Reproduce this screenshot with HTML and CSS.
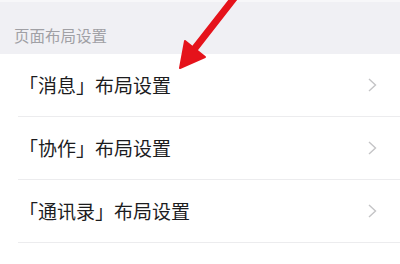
FILE: index.html
```html
<!DOCTYPE html>
<html>
  <head>
    <title>页面布局设置</title>
    <link rel="stylesheet" href="styles.css">
  </head>
  <body>
    <div class="page">
      <div class="section-title">页面布局设置</div>
      <ul class="list">
        <li class="row">
          <span class="label">「消息」布局设置</span>
          <svg class="chevron" viewBox="0 0 9 14" fill="none" stroke="#c4c4c6" stroke-width="1.4">
            <path d="M1 1l6.5 6L1 13" />
          </svg>
        </li>
        <li class="row">
          <span class="label">「协作」布局设置</span>
          <svg class="chevron" viewBox="0 0 9 14" fill="none" stroke="#c4c4c6" stroke-width="1.4">
            <path d="M1 1l6.5 6L1 13" />
          </svg>
        </li>
        <li class="row">
          <span class="label">「通讯录」布局设置</span>
          <svg class="chevron" viewBox="0 0 9 14" fill="none" stroke="#c4c4c6" stroke-width="1.4">
            <path d="M1 1l6.5 6L1 13" />
          </svg>
        </li>
        <li class="row"></li>
      </ul>
      <!-- red pointer drawn over the list -->
      <svg class="pointer" viewBox="0 0 400 264">
        <line x1="235" y1="-3" x2="192" y2="52" stroke="#e5131b" stroke-width="7" stroke-linecap="round" />
        <polygon points="180,68 185,41 205,57" fill="#e5131b" stroke="#e5131b" stroke-width="2" stroke-linejoin="round" />
      </svg>
    </div>
  </body>
</html>
```

FILE: styles.css
```css
:root {
  --bg: #f0f0f4;
  --surface: #fff;
  --divider: #ececee;
  --text: #1c1c1e;
  --text-light: #a0a0a5;
}

html,
body {
  margin: 0;
  padding: 0;
  background: var(--surface);
  font-family: "Noto Sans CJK SC", "Noto Sans", sans-serif;
  color: var(--text);
}

.page {
  position: relative;
  width: 400px;
  height: 264px;
  overflow: hidden;
}

.section-title {
  background: var(--bg);
  height: 54px;
  box-sizing: border-box;
  padding: 22px 0 0 14px;
  font-size: 15.5px;
  line-height: 22px;
  color: var(--text-light);
  border-top: 2px solid #f7f7f9;
}

.list {
  list-style: none;
  margin: 0;
  padding: 0 0 0 18px;
  background: var(--surface);
}

.row {
  display: flex;
  align-items: center;
  justify-content: space-between;
  height: 63px;
  box-sizing: border-box;
  border-bottom: 1px solid var(--divider);
  padding-right: 23px;
}

.label {
  font-size: 19px;
  line-height: 26px;
  margin-left: 1px;
}

.chevron {
  width: 9px;
  height: 14px;
}

.pointer {
  position: absolute;
  left: 0;
  top: 0;
  width: 400px;
  height: 264px;
  pointer-events: none;
}
```
